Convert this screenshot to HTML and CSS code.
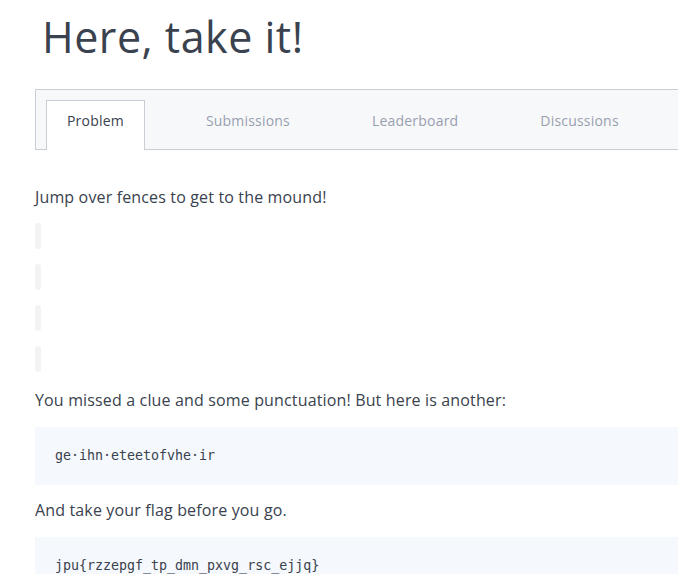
FILE: index.html
```html
<!DOCTYPE html>
<html lang="en">
<head>
<meta charset="utf-8">
<title>Here, take it!</title>
<link rel="stylesheet" href="styles.css">
</head>
<body>
<div class="page">
  <h1 class="title">Here, take it!</h1>
  <nav class="tabs">
    <a class="tab active">Problem</a>
    <a class="tab">Submissions</a>
    <a class="tab">Leaderboard</a>
    <a class="tab">Discussions</a>
  </nav>
  <div class="content">
    <p class="intro">Jump over fences to get to the mound!</p>
    <div class="fences">
      <span class="fence"></span>
      <span class="fence"></span>
      <span class="fence"></span>
      <span class="fence"></span>
    </div>
    <p class="clue">You missed a clue and some punctuation! But here is another:</p>
    <pre class="code first">ge·ihn·eteetofvhe·ir</pre>
    <p class="flag-text">And take your flag before you go.</p>
    <pre class="code">jpu{rzzepgf_tp_dmn_pxvg_rsc_ejjq}</pre>
  </div>
</div>
</body>
</html>
```
FILE: styles.css
```css
html, body {
  margin: 0;
  padding: 0;
  background: #ffffff;
  overflow: hidden;
}

body {
  font-family: "Open Sans", "Liberation Sans", sans-serif;
  color: #39424e;
}

.page {
  width: 700px;
  padding: 8px 0 0 35px;
}

.title {
  margin: 0 0 24px 7px;
  font-size: 43px;
  font-weight: 400;
  line-height: 57px;
  letter-spacing: 0.5px;
  color: #39424e;
}

.tabs {
  display: flex;
  gap: 40px;
  height: 61px;
  box-sizing: border-box;
  padding: 10px 0 0 10px;
  background: #f7f8fa;
  border: 1px solid #c9ced6;
  border-right: none;
}

.tab {
  display: block;
  box-sizing: border-box;
  height: 50px;
  margin-bottom: -1px;
  padding: 10px 20px 0;
  border: 1px solid transparent;
  border-bottom: none;
  font-size: 14px;
  line-height: 19px;
  letter-spacing: 0.2px;
  color: #979faf;
  white-space: nowrap;
}

.tab.active {
  background: #ffffff;
  border-color: #c9ced6;
  color: #39424e;
}

.content {
  padding-top: 35px;
}

.content p {
  margin: 0;
  font-size: 16px;
  line-height: 24px;
  letter-spacing: 0.15px;
}

.fences {
  display: flex;
  flex-direction: column;
  gap: 15px;
  margin: 14px 0 16px;
}

.fence {
  display: block;
  width: 6px;
  height: 26px;
  border-radius: 3px;
  background: #f3f3f4;
}

.code {
  margin: 15px 0 13px;
  padding: 20px;
  background: #f5f8fc;
  font-family: "DejaVu Sans Mono", "Liberation Mono", monospace;
  font-size: 13.3px;
  line-height: 18px;
  color: #39424e;
}

.flag-text + .code {
  margin-top: 15px;
}
```
